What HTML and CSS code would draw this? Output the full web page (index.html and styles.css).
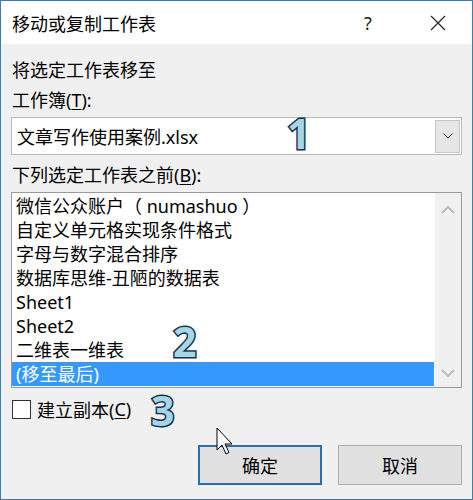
FILE: index.html
```html
<!DOCTYPE html>
<html>
<head>
    <link rel="stylesheet" href="styles.css">
</head>
<body>
    <div class="dialog">
        <div class="titlebar">
            <span class="title">移动或复制工作表</span>
            <span class="help">?</span>
            <span class="close">
                <svg width="16" height="16" viewBox="0 0 16 16"><path d="M1 1 L15 15 M15 1 L1 15" stroke="#222" stroke-width="1.2" fill="none"/></svg>
            </span>
        </div>
        <div class="content">
            <div class="label">将选定工作表移至</div>
            <div class="label gap-small">工作簿(<u>T</u>):</div>
            <div class="combo">
                <span class="combo-text">文章写作使用案例.xlsx</span>
                <span class="drop">
                    <svg width="10" height="6" viewBox="0 0 10 6"><path d="M0.5 0.5 L5 5 L9.5 0.5" stroke="#444" stroke-width="1" fill="none"/></svg>
                </span>
            </div>
            <div class="label gap-list">下列选定工作表之前(<u>B</u>):</div>
            <div class="list">
                <ul class="items">
                    <li>微信公众账户（ numashuo ）</li>
                    <li>自定义单元格实现条件格式</li>
                    <li>字母与数字混合排序</li>
                    <li>数据库思维-丑陋的数据表</li>
                    <li>Sheet1</li>
                    <li>Sheet2</li>
                    <li>二维表一维表</li>
                    <li class="selected">(移至最后)</li>
                </ul>
                <div class="scrollbar">
                    <svg width="14" height="8" viewBox="0 0 14 8"><path d="M1 7 L7 1 L13 7" stroke="#bcbcbc" stroke-width="2" fill="none"/></svg>
                    <svg width="14" height="8" viewBox="0 0 14 8"><path d="M1 1 L7 7 L13 1" stroke="#bcbcbc" stroke-width="2" fill="none"/></svg>
                </div>
            </div>
            <label class="copy"><span class="box"></span>建立副本(<u>C</u>)</label>
            <div class="buttons">
                <button type="button" class="btn primary">确定</button>
                <button type="button" class="btn">取消</button>
            </div>
        </div>

        <span class="mark mark-1">1</span>
        <span class="mark mark-2">2</span>
        <span class="mark mark-3">3</span>
        <svg class="cursor" width="18" height="28" viewBox="0 0 18 28">
            <path d="M1 1 L1 23 L6 18 L10 27 L13 25.5 L9 17 L16 17 Z" fill="#fff" stroke="#000" stroke-width="1"/>
        </svg>
    </div>
</body>
</html>
```

FILE: styles.css
```css
body {
    margin: 0;
    font-family: "Noto Sans", "Noto Sans CJK SC", sans-serif;
    font-size: 18px;
    color: #000;
}

.dialog {
    position: relative;
    width: 473px;
    height: 500px;
    box-sizing: border-box;
    border: 1px solid #3a7db4;
    background-color: #f0f0f0;
}

.titlebar {
    display: flex;
    align-items: center;
    height: 43px;
    background-color: #fff;
}

.title {
    flex: 1;
    padding-left: 11px;
}

.help {
    width: 46px;
    text-align: center;
    margin-right: 24px;
    color: #222;
}

.close {
    width: 46px;
    height: 16px;
    margin-right: 11px;
    display: flex;
    justify-content: center;
}

.content {
    padding: 14px 10px 0 10px;
}

.label {
    line-height: 24px;
    padding-left: 1px;
}

.gap-small {
    margin-top: 6px;
}

.gap-list {
    margin-top: 8px;
}

u {
    text-decoration-thickness: 1px;
    text-underline-offset: 2px;
}

.combo {
    display: flex;
    align-items: center;
    height: 38px;
    margin-top: 5px;
    box-sizing: border-box;
    border: 1px solid #b9b9b9;
    background-color: #fff;
    padding: 1px;
}

.combo-text {
    flex: 1;
    padding-left: 4px;
}

.drop {
    width: 25px;
    height: 33px;
    box-sizing: border-box;
    border: 1px solid #c6c6c6;
    background-color: #e6e6e6;
    display: flex;
    align-items: center;
    justify-content: center;
    margin-right: 0;
}

.list {
    display: flex;
    margin-top: 5px;
    border: 1px solid #9a9a9a;
    background-color: #fff;
}

.items {
    flex: 1;
    list-style: none;
    margin: 0;
    padding: 1px 1px 1px 0;
}

.items li {
    height: 24px;
    line-height: 24px;
    padding-left: 4px;
    white-space: nowrap;
}

.items li.selected {
    background-color: #3399ff;
    color: #fff;
}

.scrollbar {
    width: 26px;
    background-color: #f0f0f0;
    display: flex;
    flex-direction: column;
    justify-content: space-between;
    align-items: center;
    padding: 13px 0 10px 0;
}

.copy {
    display: flex;
    align-items: center;
    height: 24px;
    margin-top: 9px;
    padding-left: 1px;
}

.box {
    width: 17px;
    height: 17px;
    border: 1px solid #333;
    background-color: #fff;
    margin-right: 6px;
}

.buttons {
    display: flex;
    justify-content: flex-end;
    gap: 16px;
    margin-top: 24px;
}

.btn {
    width: 124px;
    height: 40px;
    font-family: "Noto Sans", "Noto Sans CJK SC", sans-serif;
    font-size: 18px;
    color: #000;
    background-color: #e1e1e1;
    border: 1px solid #adadad;
    padding: 0;
}

.btn.primary {
    border: 2px solid #2a6fad;
}

.mark {
    position: absolute;
    font-family: "Noto Sans", sans-serif;
    font-weight: 700;
    font-size: 41px;
    line-height: 1;
    color: #a5d5ea;
    -webkit-text-stroke: 3px #173447;
    paint-order: stroke fill;
}

.mark-1 {
    left: 286px;
    top: 112px;
}

.mark-2 {
    left: 172px;
    top: 320px;
}

.mark-3 {
    left: 150px;
    top: 389px;
}

.cursor {
    position: absolute;
    left: 215px;
    top: 426px;
}
```
